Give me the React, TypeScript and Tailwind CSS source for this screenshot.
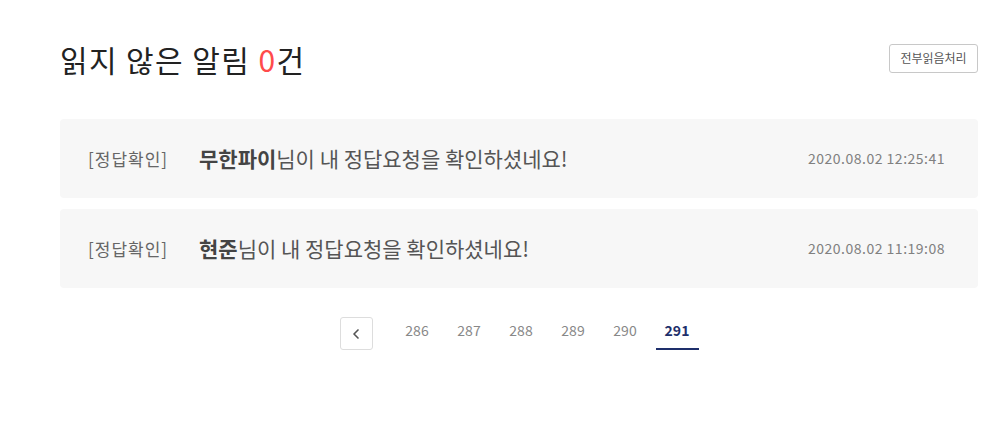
import { ChevronLeft } from 'lucide-react'

const FONT = "font-['Noto_Sans_CJK_KR','Noto_Sans',sans-serif]"

const ITEMS = [
  { name: '무한파이', date: '2020.08.02 12:25:41' },
  { name: '현준', date: '2020.08.02 11:19:08' },
]

const PAGES = [286, 287, 288, 289, 290, 291]

export default function App() {
  return (
    <div className={`${FONT} w-[1000px] h-[436px] bg-white`}>
      <div className="ml-[60px] w-[918px] pt-[39px]">
        {/* 헤더 */}
        <div className="flex items-center justify-between h-[40px]">
          <h1 className="text-[30px] leading-[40px] text-[#222] tracking-[1.4px]">
            읽지 않은 알림 <span className="text-[#ff4b4b]">0</span>건
          </h1>
          <button className="h-[29px] w-[89px] -mt-[2px] rounded-[3px] border border-[#c8c8c8] text-[12px] text-[#555] bg-white">
            전부읽음처리
          </button>
        </div>

        {/* 알림 목록 */}
        <ul className="mt-[40px] flex flex-col gap-[11px]">
          {ITEMS.map((it) => (
            <li key={it.date}
              className="flex items-center h-[79px] rounded-[4px] bg-[#f7f7f7] pl-[28px] pr-[33px]">
              <span className="w-[111px] text-[17px] text-[#666] tracking-[1px]">[정답확인]</span>
              <span className="flex-1 text-[21px] text-[#555]">
                <b className="font-bold text-[#444]">{it.name}</b>님이 내 정답요청을 확인하셨네요!
              </span>
              <span className="text-[14px] text-[#808080] tracking-[0.5px]">{it.date}</span>
            </li>
          ))}
        </ul>

        {/* 페이지네이션 */}
        <div className="mt-[29px] flex justify-center items-center">
          <button className="h-[33px] w-[33px] mr-[23px] flex items-center justify-center rounded-[3px] border border-[#ddd] bg-white text-[#555]">
            <ChevronLeft size={16} strokeWidth={2.5} />
          </button>
          <div className="flex gap-[9px]">
            {PAGES.map((p) => (
              <span key={p}
                className={`w-[43px] h-[33px] pb-[4px] flex items-center justify-center text-[14px] ${
                  p === 291 ? 'font-bold text-[#1e2f6b] border-b-2 border-[#1e2f6b]' : 'text-[#888] border-b-2 border-transparent'
                }`}>
                {p}
              </span>
            ))}
          </div>
        </div>
      </div>
    </div>
  )
}
